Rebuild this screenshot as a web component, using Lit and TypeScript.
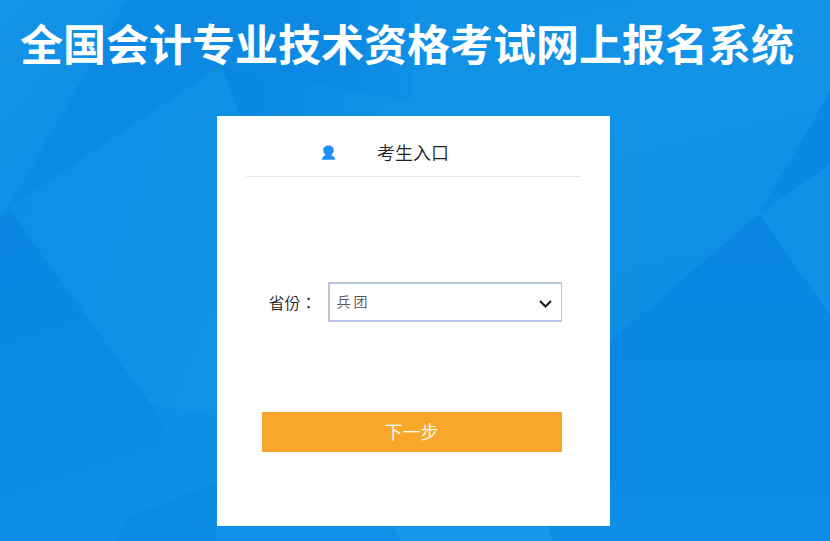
import { LitElement, html, css, svg } from "lit";
import { customElement, state } from "lit/decorators.js";

const facets: { points: string; fill: string }[] = [
  { points: "0,0 127,0 8,208 0,218", fill: "url(#light-left)" },
  { points: "127,0 408,0 414,102 222,66 8,208", fill: "url(#dark-top)" },
  { points: "8,208 222,66 240,116 240,420 150,404", fill: "url(#light-mid)" },
  { points: "0,218 8,208 150,404 200,490 130,515 115,541 0,541", fill: "url(#dark-left)" },
  { points: "150,404 240,420 240,475 195,490", fill: "#0e8ee4" },
  { points: "115,541 130,515 240,476 240,541", fill: "#0b8ae2" },
  { points: "222,66 270,76 414,102 414,130 245,130", fill: "url(#wedge)" },
  { points: "408,0 830,0 830,92 759,214 600,350 414,130", fill: "url(#light-right)" },
  { points: "830,92 759,214 830,165", fill: "#0b89e2" },
  { points: "830,165 759,214 830,315", fill: "#0f91e6" },
  { points: "759,214 830,315 830,541 600,541 600,350", fill: "url(#dark-right)" },
  { points: "216,510 395,500 400,541 216,541", fill: "#0f8fe6" },
  { points: "388,518 545,518 553,541 400,541", fill: "#1598e7" },
];

@customElement("low-poly-backdrop")
export class LowPolyBackdrop extends LitElement {
  static styles = css`
    :host {
      display: block;
      overflow: hidden;
    }
    .art {
      display: block;
      width: 100%;
      height: 100%;
    }
  `;

  render() {
    return html`
      <svg class="art" viewBox="0 0 830 541" preserveAspectRatio="xMidYMid slice" aria-hidden="true">
        <defs>
          <linearGradient id="light-left" x1="0" y1="0" x2="0.6" y2="1">
            <stop offset="0" stop-color="#1395e8" />
            <stop offset="1" stop-color="#0e8de4" />
          </linearGradient>
          <linearGradient id="dark-top" x1="0" y1="0" x2="1" y2="0">
            <stop offset="0" stop-color="#0c89e2" />
            <stop offset="0.8" stop-color="#0c8ae3" />
            <stop offset="1" stop-color="#0f8fe5" />
          </linearGradient>
          <linearGradient id="light-mid" x1="0" y1="0" x2="1" y2="0.6">
            <stop offset="0" stop-color="#0e8de4" />
            <stop offset="1" stop-color="#1192e6" />
          </linearGradient>
          <linearGradient id="dark-left" x1="0" y1="0" x2="0.2" y2="1">
            <stop offset="0" stop-color="#0a86e2" />
            <stop offset="0.7" stop-color="#0b8ae3" />
            <stop offset="1" stop-color="#0e8ee5" />
          </linearGradient>
          <linearGradient id="wedge" x1="0" y1="0" x2="1" y2="0">
            <stop offset="0" stop-color="#0a86e0" />
            <stop offset="0.5" stop-color="#0d8de4" />
            <stop offset="1" stop-color="#1294e7" />
          </linearGradient>
          <linearGradient id="light-right" x1="0" y1="0" x2="0.3" y2="1">
            <stop offset="0" stop-color="#1091e6" />
            <stop offset="0.4" stop-color="#1193e7" />
            <stop offset="1" stop-color="#0e8ee3" />
          </linearGradient>
          <linearGradient id="dark-right" x1="0" y1="0" x2="0" y2="1">
            <stop offset="0" stop-color="#0a86e2" />
            <stop offset="0.8" stop-color="#0b8ae3" />
            <stop offset="1" stop-color="#0e8fe6" />
          </linearGradient>
        </defs>
        <rect width="830" height="541" fill="#0d8de4" />
        ${facets.map((f) => svg`<polygon points=${f.points} fill=${f.fill} />`)}
      </svg>
    `;
  }
}

@customElement("app-root")
export class AppRoot extends LitElement {
  @state() private province = "bt";

  static styles = css`
    :host {
      display: block;
      position: relative;
      min-height: 100vh;
      box-sizing: border-box;
      overflow: hidden;
      background: #0d8de4;
      color: #333;
      font-family: "Noto Sans CJK SC", "Liberation Sans", sans-serif;
    }
    * {
      box-sizing: border-box;
    }
    .backdrop {
      position: absolute;
      inset: 0;
    }
    .page {
      position: relative;
      padding: 12px 4px 15px 0;
    }
    .title {
      margin: 0 0 44px 20px;
      color: #fff;
      font-size: 43px;
      font-weight: 700;
      line-height: 60px;
      white-space: nowrap;
    }
    .card {
      width: 100%;
      max-width: 393px;
      margin: 0 auto;
      padding: 0 29px 74px;
      background: #fff;
    }
    .head {
      display: grid;
      grid-template-columns: 1fr auto 1fr;
      align-items: center;
      padding: 18px 0 6px;
      border-bottom: 1px solid #e6e6e6;
    }
    .user {
      display: block;
      justify-self: end;
      width: 16px;
      height: 16px;
      margin-right: 40px;
    }
    .heading {
      margin: 0;
      font-size: 18px;
      font-weight: 350;
      line-height: 36px;
      color: #222;
    }
    .form {
      padding: 105px 19px 0 16px;
    }
    .field {
      display: flex;
      align-items: center;
      padding-left: 7px;
      margin-bottom: 90px;
    }
    .label {
      flex: none;
      width: 59px;
      font-family: "Noto Sans CJK TC", "Noto Sans CJK SC", sans-serif;
      font-size: 16px;
      font-weight: 350;
      line-height: 24px;
      white-space: nowrap;
      color: #222;
    }
    .picker {
      position: relative;
      flex: 1;
      min-width: 0;
    }
    .select {
      appearance: none;
      display: block;
      width: 100%;
      height: 40px;
      margin: 0;
      padding: 0 32px 2px 8px;
      border: 1px solid #c6c6c8;
      border-radius: 0;
      box-shadow: inset 1px 1px #a4c4fa, inset 0 -1px #a4c4fa;
      background: #fff;
      color: #555;
      font: 350 14px/20px "Noto Sans CJK SC", "Liberation Sans", sans-serif;
    }
    .chevron {
      position: absolute;
      right: 10px;
      top: 16px;
      width: 14px;
      height: 12px;
      pointer-events: none;
    }
    .next {
      display: block;
      width: 100%;
      height: 40px;
      margin: 0;
      padding: 0 0 2px;
      border: 0;
      background: #f8a72b;
      color: #fff;
      font: 350 18px/38px "Noto Sans CJK SC", "Liberation Sans", sans-serif;
      cursor: pointer;
    }
  `;

  private onProvince(e: Event) {
    this.province = (e.target as HTMLSelectElement).value;
  }

  render() {
    return html`
      <low-poly-backdrop class="backdrop"></low-poly-backdrop>
      <main class="page">
        <h1 class="title">全国会计专业技术资格考试网上报名系统</h1>
        <section class="card">
          <header class="head">
            <svg class="user" viewBox="0 0 16 16" aria-hidden="true">
              <path
                fill="#1e90ff"
                d="M7.500 1.500C4.400 1.500 2.200 3.500 2.200 6.200C2.200 8 3 9.400 4.300 10.300V11.200C2.500 12 1 13.200 0.700 15.800H14.300C14 13.200 12.500 12 10.700 11.200V10.300C12 9.400 12.800 8 12.800 6.200C12.800 3.500 10.600 1.500 7.500 1.500Z"
              />
            </svg>
            <h2 class="heading">考生入口</h2>
          </header>
          <form class="form" @submit=${(e: Event) => e.preventDefault()}>
            <div class="field">
              <label class="label" for="province">省份：</label>
              <div class="picker">
                <select class="select" id="province" .value=${this.province} @change=${this.onProvince}>
                  <option value="bt">兵 团</option>
                </select>
                <svg class="chevron" viewBox="0 0 14 12" aria-hidden="true">
                  <path d="M2 3L7.500 8.500L13 3" fill="none" stroke="#1c1c1c" stroke-width="2" />
                </svg>
              </div>
            </div>
            <button class="next" type="submit">下一步</button>
          </form>
        </section>
      </main>
    `;
  }
}
